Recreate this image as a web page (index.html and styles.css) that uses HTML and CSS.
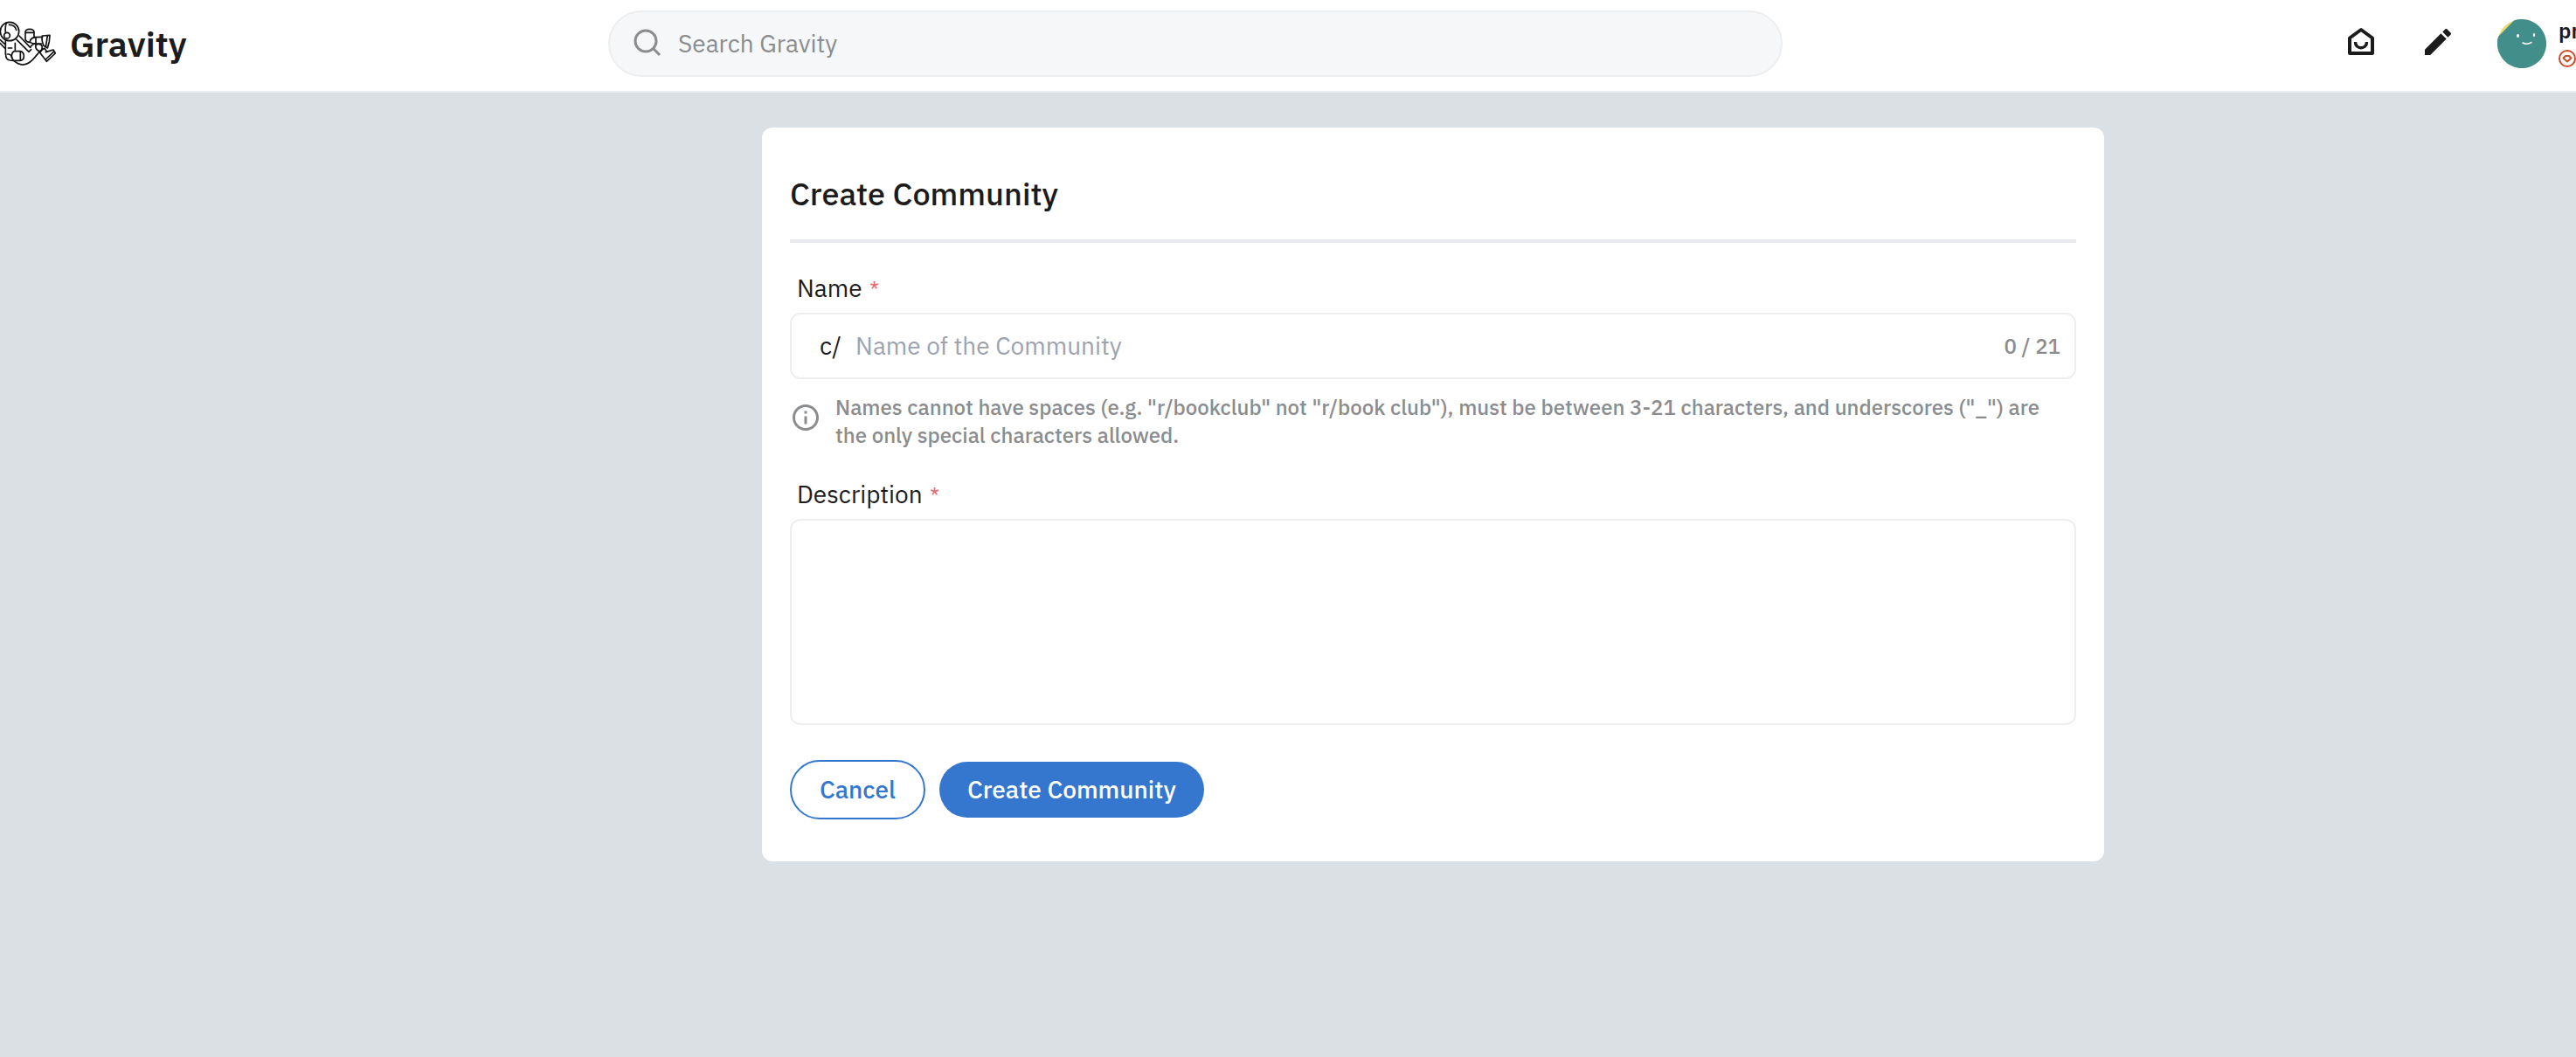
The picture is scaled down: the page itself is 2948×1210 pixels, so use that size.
FILE: index.html
```html
<!DOCTYPE html>
<html lang="en">
<head>
<meta charset="utf-8">
<meta name="viewport" content="width=device-width, initial-scale=1">
<title>Create Community - Gravity</title>
<link rel="stylesheet" href="styles.css">
</head>
<body>
<header class="topbar">
  <a class="brand" href="#">
    <svg class="brand-mark" viewBox="0 0 204 180" fill="none" stroke="#111" stroke-width="5" stroke-linecap="round" stroke-linejoin="round" aria-hidden="true">
      <circle cx="33" cy="48" r="32"/>
      <path d="M22 19c-4 10-4 22-3 33M31 25c12 0 22 6 25 18"/>
      <circle cx="24" cy="62" r="10" fill="#fff"/>
      <path d="M0 76l17 16M0 88l16 17M19 80v46M52 88v24M28 105h13"/>
      <path d="M48 116h22q12 3 12 17t-12 15H48q-8-4-8-16t8-16zM70 116v32"/>
      <path d="M20 126q-2 18 14 21l12 1M26 126q12-1 15 12"/>
      <path d="M66 63l38 40M57 76l42 42M99 118l8-8"/>
      <path d="M48 149q32 28 64-4 18-20 22-26"/>
      <path d="M87 76V49q2-9 15-9t15 9v21M87 52h30M87 76q6 10 16 9"/>
      <path d="M103 85q0-14 17-17l26-1M103 85q8 5 20 5M123 68v22h20"/>
      <path d="M145 63l26-2-2 22-6 22-13-8q-8-18-5-34zM163 63l-6 38"/>
      <path d="M104 102q8-12 18-12M122 96q12-10 22 1 3 15-8 19-14-4-14-20z"/>
      <path d="M137 121q6-12 16-15l7 10M137 121l23 30 30-28-7-12-26 8M157 144l27-26"/>
    </svg>
    <span class="brand-name">Gravity</span>
  </a>
  <form class="search" role="search">
    <svg class="search-icon" viewBox="0 0 36 36" fill="none" stroke="#8a8c8e" stroke-width="3" aria-hidden="true"><circle cx="15" cy="15" r="12"/><path d="M24 24l7 7"/></svg>
    <input class="search-input" type="text" placeholder="Search Gravity" aria-label="Search Gravity">
  </form>
  <nav class="actions" aria-label="Account">
    <button class="icon-button" type="button" aria-label="Inbox">
      <svg class="action-icon" viewBox="0 0 40 40" fill="none" stroke="#1c1c1c" stroke-width="4" stroke-linejoin="round" aria-hidden="true"><path d="M7 15.500L20 6l13 9.500V33H7z"/><path d="M13.500 20c0 9 13 9 13 0" stroke-width="3.500"/></svg>
    </button>
    <button class="icon-button" type="button" aria-label="Create a post">
      <svg class="action-icon" viewBox="0 0 24 24" fill="#1c1c1c" aria-hidden="true"><path d="M3 17.250V21h3.750L17.810 9.940l-3.750-3.750zM20.710 7.040c.39-.39.39-1.020 0-1.410l-2.340-2.340c-.39-.39-1.020-.39-1.410 0l-1.830 1.830 3.750 3.750z"/></svg>
    </button>
    <a class="user" href="#">
      <svg class="avatar" viewBox="0 0 56 56" aria-hidden="true">
        <circle cx="28" cy="28" r="28" fill="#e8d86e"/>
        <path d="M1 20L19 1.500A28 28 0 1 1 12 51Q5 46 1.500 37A28 28 0 0 1 1 20z" fill="#418e8b"/>
        <g fill="#fff"><ellipse cx="23.500" cy="19" rx="1.500" ry="2"/><ellipse cx="42" cy="18" rx="1.200" ry="2"/></g>
        <path d="M29 27q5 2.500 10-.5" fill="none" stroke="#fff" stroke-width="1.500" stroke-linecap="round"/>
      </svg>
      <span class="user-meta">
        <span class="user-name">pr</span>
        <svg class="karma" viewBox="0 0 20 20" fill="none" stroke="#cc4a26" stroke-width="2" stroke-linejoin="round" aria-hidden="true"><circle cx="10" cy="10" r="9"/><path d="M8 7h4l2.500 2.500L10 13.500 5.500 9.500z"/></svg>
      </span>
    </a>
  </nav>
</header>
<main class="page">
  <form class="card">
    <h1 class="card-title">Create Community</h1>
    <div class="field">
      <label class="label" for="name">Name <span class="required">*</span></label>
      <div class="name-box">
        <span class="prefix">c/</span>
        <input class="name-input" id="name" type="text" maxlength="21" placeholder="Name of the Community" aria-describedby="name-hint">
        <span class="counter">0 / 21</span>
      </div>
      <div class="hint">
        <svg class="hint-icon" viewBox="0 0 24 24" fill="#8a8c8e" aria-hidden="true"><path d="M11 7h2v2h-2zm0 4h2v6h-2zm1-9C6.480 2 2 6.480 2 12s4.480 10 10 10 10-4.480 10-10S17.520 2 12 2zm0 18c-4.410 0-8-3.590-8-8s3.590-8 8-8 8 3.590 8 8-3.590 8-8 8z"/></svg>
        <p class="hint-text" id="name-hint">Names cannot have spaces (e.g. "r/bookclub" not "r/book club"), must be between 3-21 characters, and underscores ("_") are the only special characters allowed.</p>
      </div>
    </div>
    <div class="field">
      <label class="label" for="description">Description <span class="required">*</span></label>
      <textarea class="description" id="description"></textarea>
    </div>
    <div class="buttons">
      <button class="button button-outline" type="button">Cancel</button>
      <button class="button button-solid" type="submit">Create Community</button>
    </div>
  </form>
</main>
</body>
</html>
```
FILE: styles.css
```css
* { box-sizing: border-box; }

body {
  margin: 0;
  min-height: 100vh;
  background: #dbe0e4;
  color: #1c1c1c;
  font: 400 28px/40px "IBM Plex Sans", Roboto, sans-serif;
  overflow-x: hidden;
}

button, input, textarea { font: inherit; color: inherit; }
a { color: inherit; text-decoration: none; }
svg { display: block; flex: none; }

.topbar {
  display: grid;
  grid-template-columns: 696fr 1344fr 908fr;
  align-items: center;
  padding: 12px 0 16px;
  background: #fff;
  border-bottom: 2px solid #e9edf0;
}

.brand { display: flex; align-items: center; gap: 12px; }
.brand-mark { width: 68px; height: 60px; }
.brand-name { font-size: 40px; font-weight: 600; line-height: 56px; }

.search {
  display: flex;
  align-items: center;
  gap: 16px;
  height: 76px;
  padding: 0 32px 0 26px;
  background: #f5f7f9;
  border: 2px solid #edeeef;
  border-radius: 38px;
}
.search-icon { width: 36px; height: 36px; }
.search-input { flex: 1; min-width: 0; padding: 0; border: 0; background: none; outline: 0; }
.search-input::placeholder { color: #8a8c8e; opacity: 1; }

.actions { display: flex; align-items: center; justify-content: flex-end; gap: 48px; }
.icon-button { padding: 0 0 4px; border: 0; background: none; }
.action-icon { width: 40px; height: 40px; }
.user { display: flex; align-items: center; gap: 14px; }
.avatar { width: 56px; height: 56px; }
.user-meta { display: flex; flex-direction: column; gap: 6px; width: 20px; padding-bottom: 4px; }
.user-name { font-size: 24px; font-weight: 600; line-height: 32px; }
.karma { width: 20px; height: 20px; }

.page {
  display: grid;
  grid-template-columns: 872fr 1536fr 540fr;
  padding: 40px 0;
}

.card {
  grid-column: 2;
  display: flex;
  flex-direction: column;
  gap: 32px;
  padding: 48px 32px;
  background: #fff;
  border-radius: 12px;
}
.card-title {
  margin: 0;
  padding-bottom: 24px;
  border-bottom: 4px solid #e8eaed;
  font-size: 36px;
  font-weight: 500;
  line-height: 56px;
}

.field { display: flex; flex-direction: column; gap: 8px; }
.label { padding-left: 8px; }
.required { padding-left: 2px; color: #e86a6f; font-size: 24px; line-height: 32px; }

.name-box {
  display: flex;
  align-items: center;
  gap: 16px;
  height: 76px;
  padding: 0 16px 0 32px;
  border: 2px solid #eee;
  border-radius: 12px;
}
.name-input { flex: 1; min-width: 0; padding: 0; border: 0; background: none; outline: 0; }
.name-input::placeholder { color: #9ca3af; opacity: 1; }
.counter { color: #8a8c8e; font-size: 24px; font-weight: 500; line-height: 32px; }

.hint { display: flex; gap: 16px; padding: 8px 16px 0 0; color: #8a8c8e; }
.hint-icon { width: 36px; height: 36px; margin-top: 10px; }
.hint-text { margin: 0; font-size: 24px; font-weight: 500; line-height: 32px; }

.description {
  display: block;
  width: 100%;
  height: 236px;
  padding: 16px 32px;
  border: 2px solid #eee;
  border-radius: 12px;
  outline: 0;
  resize: none;
}

.buttons { display: flex; align-items: center; gap: 16px; padding-top: 8px; }
.button { padding: 12px 32px; border: 0; border-radius: 34px; font-weight: 500; }
.button-outline { border: 2px solid #3577cf; background: #fff; color: #3577cf; }
.button-solid { background: #3577cf; color: #fff; }
```
